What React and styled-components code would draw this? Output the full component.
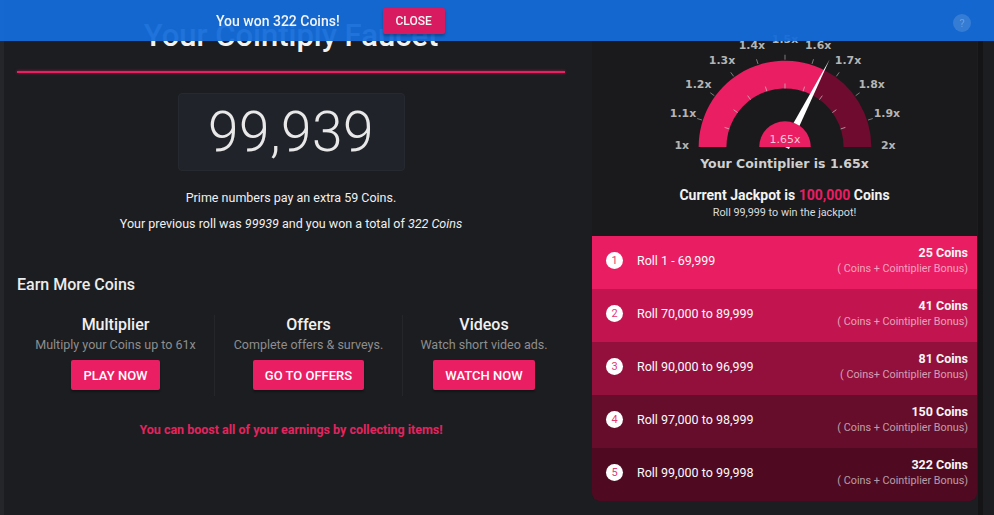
import React from "react";
import styled, { createGlobalStyle } from "styled-components";

const Global = createGlobalStyle`
  html, body { margin: 0; padding: 0; }
  body {
    background: #1c1d20;
    font-family: Roboto, "Liberation Sans", Arial, sans-serif;
    color: #fff;
    width: 994px;
    height: 515px;
    overflow: hidden;
  }
`;

const Page = styled.div`
  display: flex;
  height: 515px;
  width: 994px;
  border-left: 4px solid #24262a;
  box-sizing: border-box;
`;

const LeftCol = styled.div`
  width: 576px;
  padding: 16px 0 0 13px;
  box-sizing: border-box;
  display: flex;
  flex-direction: column;
`;

const Inner = styled.div`
  width: 548px;
  display: flex;
  flex-direction: column;
  align-items: center;
`;

const Title = styled.h1`
  margin: 0;
  font-size: 31px;
  line-height: 40px;
  font-weight: 500;
  color: #f2f2f2;
`;

const GlowLine = styled.div`
  align-self: stretch;
  height: 2px;
  margin-top: 15px;
  background: #e91e63;
  box-shadow: 0 0 3px rgba(233, 30, 99, 0.7);
`;

const RollBox = styled.div`
  margin-top: 20px;
  width: 227px;
  height: 78px;
  box-sizing: border-box;
  background: #20232a;
  border: 1px solid #262930;
  border-radius: 4px;
  display: flex;
  align-items: center;
  justify-content: center;
  font-size: 55px;
  font-weight: 300;
  color: #e8e8e8;
  letter-spacing: 0.5px;
`;

const Info = styled.p`
  margin: ${(p) => p.$mt}px 0 0;
  font-size: 12.5px;
  line-height: 18px;
  color: #f0f0f0;
  em { font-style: italic; }
`;

const SectionTitle = styled.h3`
  align-self: flex-start;
  margin: 42px 0 0;
  font-size: 16px;
  line-height: 20px;
  font-weight: 500;
  color: #ececec;
`;

const Earn = styled.div`
  margin-top: 20px;
  align-self: stretch;
  display: grid;
  grid-template-columns: 197px 188px 163px;
`;

const EarnCol = styled.div`
  display: flex;
  flex-direction: column;
  align-items: center;
  padding-bottom: 6px;
  border-left: ${(p) => (p.$sep ? "1px solid #25262a" : "none")};
`;

const EarnTitle = styled.div`
  font-size: 16px;
  line-height: 20px;
  font-weight: 500;
  color: #f0f0f0;
`;

const EarnSub = styled.div`
  margin-top: 2px;
  font-size: 12.5px;
  line-height: 16px;
  color: #8e8e8e;
`;

const PinkButton = styled.button`
  margin-top: 7px;
  height: 30px;
  padding: 0 12px;
  border: none;
  border-radius: 2px;
  background: #e91e63;
  color: #fff;
  font-family: Roboto, "Liberation Sans", Arial, sans-serif;
  font-size: 13px;
  font-weight: 500;
  text-transform: uppercase;
  box-shadow: 0 2px 2px rgba(0, 0, 0, 0.3);
`;

const Boost = styled.p`
  margin: 26px 0 0;
  font-size: 12.5px;
  line-height: 16px;
  font-weight: 700;
  color: #e2245f;
`;

const RightPanel = styled.div`
  margin-left: 12px;
  width: 385px;
  height: 501px;
  background: #1a1a1c;
  border-radius: 0 0 8px 8px;
  overflow: hidden;
  padding-top: 19px;
  box-sizing: border-box;
  display: flex;
  flex-direction: column;
  align-items: center;
`;

const RightEdge = styled.div`
  margin-left: 1px;
  width: 5px;
  background: #141416;
`;

const GaugeCaption = styled.div`
  margin-top: 5px;
  font-family: "DejaVu Sans", Verdana, sans-serif;
  font-weight: 700;
  font-size: 12.5px;
  line-height: 16px;
  color: #cfcfcf;
`;

const Jackpot = styled.div`
  margin-top: 14px;
  font-size: 14px;
  line-height: 18px;
  font-weight: 700;
  color: #f2f2f2;
  span { color: #e91e63; }
`;

const JackpotSub = styled.div`
  margin-top: 2px;
  font-size: 10.8px;
  line-height: 14px;
  color: #dcdcdc;
`;

const Rows = styled.div`
  margin-top: 16px;
  align-self: stretch;
  display: flex;
  flex-direction: column;
`;

const Row = styled.div`
  height: ${(p) => p.$h}px;
  background: ${(p) => p.$bg};
  display: flex;
  align-items: center;
  padding: 0 9px 5px 14px;
  box-sizing: border-box;
  gap: 14px;
`;

const Num = styled.div`
  width: 17px;
  height: 17px;
  border-radius: 50%;
  background: #fff;
  color: #e33a72;
  font-size: 11px;
  display: flex;
  align-items: center;
  justify-content: center;
`;

const RowLabel = styled.div`
  flex: 1;
  font-size: 12.5px;
  color: #fafafa;
`;

const RowPrize = styled.div`
  text-align: right;
  display: flex;
  flex-direction: column;
  b {
    font-size: 12.5px;
    line-height: 16px;
    font-weight: 700;
    color: #f6f6f6;
  }
  small {
    font-size: 10.8px;
    line-height: 15px;
    color: rgba(255, 255, 255, 0.6);
  }
`;

const Notice = styled.div`
  position: fixed;
  top: 0;
  left: 0;
  width: 994px;
  height: 41px;
  background: rgba(20, 108, 216, 0.95);
  display: flex;
  align-items: center;
  padding-left: 216px;
  box-sizing: border-box;
  gap: 43px;
  z-index: 10;
`;

const NoticeText = styled.span`
  font-size: 14px;
  font-weight: 500;
  color: #f4f4f4;
`;

const CloseBtn = styled.button`
  height: 26px;
  width: 62px;
  border: none;
  border-radius: 2px;
  background: #d81b60;
  color: #f4f4f4;
  font-family: Roboto, "Liberation Sans", Arial, sans-serif;
  font-size: 12px;
  font-weight: 500;
  box-shadow: 0 2px 3px rgba(0, 0, 0, 0.3);
`;

const Help = styled.div`
  position: absolute;
  left: 953px;
  top: 14px;
  width: 18px;
  height: 18px;
  border-radius: 50%;
  background: rgba(255, 255, 255, 0.14);
  color: rgba(255, 255, 255, 0.25);
  font-size: 11px;
  display: flex;
  align-items: center;
  justify-content: center;
`;

function Gauge() {
  const cx = 193;
  const cy = 129;
  const R = 87;
  const r = 59;
  const val = 0.65;
  const pt = (rad, a) => [cx + rad * Math.cos(a), cy - rad * Math.sin(a)];
  const arc = (a0, a1, color) => {
    const [x0, y0] = pt(R, a0);
    const [x1, y1] = pt(R, a1);
    const [x2, y2] = pt(r, a1);
    const [x3, y3] = pt(r, a0);
    return (
      <path
        d={`M${x0} ${y0} A${R} ${R} 0 0 1 ${x1} ${y1} L${x2} ${y2} A${r} ${r} 0 0 0 ${x3} ${y3} Z`}
        fill={color}
      />
    );
  };
  const aVal = Math.PI - val * Math.PI;
  const labels = ["1x", "1.1x", "1.2x", "1.3x", "1.4x", "1.5x", "1.6x", "1.7x", "1.8x", "1.9x", "2x"];
  const tip = pt(99, aVal);
  const perp = aVal + Math.PI / 2;
  const b1 = [cx + 4.5 * Math.cos(perp), cy - 4.5 * Math.sin(perp)];
  const b2 = [cx - 4.5 * Math.cos(perp), cy + 4.5 * Math.sin(perp)];
  return (
    <svg width="385" height="133" viewBox="0 0 385 133" style={{ display: "block" }}>
      {arc(Math.PI, aVal, "#e91e63")}
      {arc(aVal, 0, "#6e0b2f")}
      {labels.map((l, i) => {
        const a = Math.PI - (i / 10) * Math.PI;
        const [ox0, oy0] = pt(R + 1, a);
        const [ox1, oy1] = pt(R + 6, a);
        const [ix0, iy0] = pt(r, a);
        const [ix1, iy1] = pt(r + 5, a);
        const [lx, ly] = pt(108, a);
        return (
          <g key={l}>
            {i > 0 && i < 10 && (
              <>
                <line x1={ox0} y1={oy0} x2={ox1} y2={oy1} stroke="#7c7c7c" strokeWidth="1" />
                <line x1={ix0} y1={iy0} x2={ix1} y2={iy1} stroke="rgba(200,200,200,0.7)" strokeWidth="1" />
              </>
            )}
            <text
              x={lx + (i === 0 ? 4 : i === 10 ? -4 : 0)}
              y={ly + (i === 0 || i === 10 ? -2 : 0)}
              textAnchor="middle"
              dominantBaseline="central"
              fontFamily="'DejaVu Sans', Verdana, sans-serif"
              fontWeight="700"
              fontSize="11"
              fill="#b4b4b4"
            >
              {l}
            </text>
          </g>
        );
      })}
      <polygon points={`${b1[0]},${b1[1]} ${tip[0]},${tip[1]} ${b2[0]},${b2[1]}`} fill="#fff" />
      <path d={`M${cx - 26} ${cy} A26 26 0 0 1 ${cx + 26} ${cy} Z`} fill="#e91e63" />
      <text
        x={cx}
        y={cy - 8}
        textAnchor="middle"
        dominantBaseline="central"
        fontFamily="'DejaVu Sans', Verdana, sans-serif"
        fontSize="11"
        fill="#f7c6d6"
      >
        1.65x
      </text>
    </svg>
  );
}

const rows = [
  { n: 1, label: "Roll 1 - 69,999", prize: "25 Coins", sub: "( Coins + Cointiplier Bonus)", bg: "#e81d62", h: 53 },
  { n: 2, label: "Roll 70,000 to 89,999", prize: "41 Coins", sub: "( Coins + Cointiplier Bonus)", bg: "#c2154f", h: 53 },
  { n: 3, label: "Roll 90,000 to 96,999", prize: "81 Coins", sub: "( Coins+ Cointiplier Bonus)", bg: "#93103d", h: 53 },
  { n: 4, label: "Roll 97,000 to 98,999", prize: "150 Coins", sub: "( Coins + Cointiplier Bonus)", bg: "#650d2b", h: 53 },
  { n: 5, label: "Roll 99,000 to 99,998", prize: "322 Coins", sub: "( Coins + Cointiplier Bonus)", bg: "#4f0a22", h: 53 },
];

const earn = [
  { t: "Multiplier", s: "Multiply your Coins up to 61x", b: "Play Now" },
  { t: "Offers", s: "Complete offers & surveys.", b: "Go to Offers" },
  { t: "Videos", s: "Watch short video ads.", b: "Watch Now" },
];

export default function App() {
  return (
    <>
      <Global />
      <Page>
        <LeftCol>
          <Inner>
            <Title>Your Cointiply Faucet</Title>
            <GlowLine />
            <RollBox>99,939</RollBox>
            <Info $mt={18}>Prime numbers pay an extra 59 Coins.</Info>
            <Info $mt={8}>
              Your previous roll was <em>99939</em> and you won a total of <em>322 Coins</em>
            </Info>
            <SectionTitle>Earn More Coins</SectionTitle>
            <Earn>
              {earn.map((e, i) => (
                <EarnCol key={e.t} $sep={i > 0}>
                  <EarnTitle>{e.t}</EarnTitle>
                  <EarnSub>{e.s}</EarnSub>
                  <PinkButton>{e.b}</PinkButton>
                </EarnCol>
              ))}
            </Earn>
            <Boost>You can boost all of your earnings by collecting items!</Boost>
          </Inner>
        </LeftCol>
        <RightPanel>
          <Gauge />
          <GaugeCaption>Your Cointiplier is 1.65x</GaugeCaption>
          <Jackpot>
            Current Jackpot is <span>100,000</span> Coins
          </Jackpot>
          <JackpotSub>Roll 99,999 to win the jackpot!</JackpotSub>
          <Rows>
            {rows.map((r) => (
              <Row key={r.n} $bg={r.bg} $h={r.h}>
                <Num>{r.n}</Num>
                <RowLabel>{r.label}</RowLabel>
                <RowPrize>
                  <b>{r.prize}</b>
                  <small>{r.sub}</small>
                </RowPrize>
              </Row>
            ))}
          </Rows>
        </RightPanel>
        <RightEdge />
      </Page>
      <Notice>
        <NoticeText>You won 322 Coins!</NoticeText>
        <CloseBtn>CLOSE</CloseBtn>
        <Help>?</Help>
      </Notice>
    </>
  );
}
